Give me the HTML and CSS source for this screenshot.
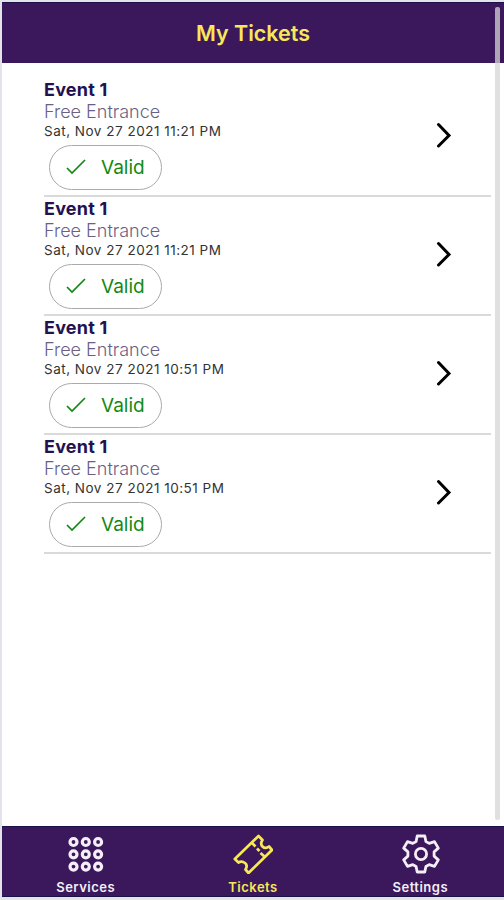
FILE: index.html
```html
<!DOCTYPE html>
<html lang="en">
<head>
    <meta charset="UTF-8">
    <meta name="viewport" content="width=device-width, initial-scale=1.0">
    <title>My Tickets</title>
    <link rel="stylesheet" href="styles.css">
</head>
<body>
    <div class="app">
        <header class="app-header">
            <h1>My Tickets</h1>
        </header>

        <!-- Ticket list -->
        <main class="ticket-list">
            <div class="ticket">
                <div class="ticket-info">
                    <h2>Event 1</h2>
                    <p class="ticket-type">Free Entrance</p>
                    <p class="ticket-date">Sat, Nov 27 2021 11:21 PM</p>
                    <div class="status">
                        <svg class="check" viewBox="0 0 22 18"><path d="M2 10l5 5L20 2"/></svg>
                        <span>Valid</span>
                    </div>
                </div>
                <svg class="chevron" viewBox="0 0 16 26"><path d="M2.5 2.500L13 13.500 2.500 24"/></svg>
            </div>
            <div class="ticket">
                <div class="ticket-info">
                    <h2>Event 1</h2>
                    <p class="ticket-type">Free Entrance</p>
                    <p class="ticket-date">Sat, Nov 27 2021 11:21 PM</p>
                    <div class="status">
                        <svg class="check" viewBox="0 0 22 18"><path d="M2 10l5 5L20 2"/></svg>
                        <span>Valid</span>
                    </div>
                </div>
                <svg class="chevron" viewBox="0 0 16 26"><path d="M2.5 2.500L13 13.500 2.500 24"/></svg>
            </div>
            <div class="ticket">
                <div class="ticket-info">
                    <h2>Event 1</h2>
                    <p class="ticket-type">Free Entrance</p>
                    <p class="ticket-date">Sat, Nov 27 2021 10:51 PM</p>
                    <div class="status">
                        <svg class="check" viewBox="0 0 22 18"><path d="M2 10l5 5L20 2"/></svg>
                        <span>Valid</span>
                    </div>
                </div>
                <svg class="chevron" viewBox="0 0 16 26"><path d="M2.5 2.500L13 13.500 2.500 24"/></svg>
            </div>
            <div class="ticket">
                <div class="ticket-info">
                    <h2>Event 1</h2>
                    <p class="ticket-type">Free Entrance</p>
                    <p class="ticket-date">Sat, Nov 27 2021 10:51 PM</p>
                    <div class="status">
                        <svg class="check" viewBox="0 0 22 18"><path d="M2 10l5 5L20 2"/></svg>
                        <span>Valid</span>
                    </div>
                </div>
                <svg class="chevron" viewBox="0 0 16 26"><path d="M2.5 2.500L13 13.500 2.500 24"/></svg>
            </div>
        </main>

        <!-- Bottom tabs -->
        <nav class="tab-bar">
            <a class="tab">
                <svg viewBox="0 0 40 40" stroke-width="3.2">
                    <circle cx="7.5" cy="8" r="3.5"/><circle cx="19.8" cy="8" r="3.5"/><circle cx="32.1" cy="8" r="3.5"/>
                    <circle cx="7.5" cy="20.3" r="3.5"/><circle cx="19.8" cy="20.3" r="3.5"/><circle cx="32.1" cy="20.3" r="3.5"/>
                    <circle cx="7.5" cy="32.6" r="3.5"/><circle cx="19.8" cy="32.6" r="3.5"/><circle cx="32.1" cy="32.6" r="3.5"/>
                </svg>
                <span>Services</span>
            </a>
            <a class="tab active">
                <svg viewBox="0 0 40 40" stroke-width="2.7">
                    <path d="M25.5 2l4 4c-2 3-1.500 5 0 6.500s4 2 6.500 0l3 3.500L15.500 39l-3-3.500c1.500-2.500 1.500-5-.5-6.500s-4-2-6.500-.5L1.800 25z"/>
                    <path d="M19 9l3.500 3.500m1.500 2l2.500 2.500m1 2l4.500 4"/>
                </svg>
                <span>Tickets</span>
            </a>
            <a class="tab">
                <svg viewBox="0 0 40 40" stroke-width="2.8">
                    <path d="M17.2 2h7.600l1.100 5.500 3.300 1.900 5.300-1.800 3.800 6.500-4.200 3.800v4.200l4.200 3.800-3.800 6.500-5.300-1.800-3.300 1.900-1.100 5.500h-7.600l-1.100-5.500-3.300-1.900-5.300 1.800-3.800-6.500 4.200-3.800v-4.200l-4.200-3.800 3.800-6.500 5.300 1.800 3.300-1.900z"/>
                    <circle cx="21" cy="20" r="5.6"/>
                </svg>
                <span>Settings</span>
            </a>
        </nav>
        <div class="scroll-thumb"></div>
    </div>
</body>
</html>
```
FILE: styles.css
```css
:root {
    --purple: #3b185b;
    --yellow: #f8e858;
    --navy: #241150;
    --frame: #e3e4ea;
}

* {
    box-sizing: border-box;
}

body {
    margin: 0;
    font-family: Inter, "Liberation Sans", sans-serif;
    background: #fff;
}

h1, h2, p {
    margin: 0;
}

.app {
    position: relative;
    display: flex;
    flex-direction: column;
    height: 900px;
    border: solid var(--frame);
    border-width: 2px 0 3px 2px;
}

/* Header */
.app-header {
    display: flex;
    align-items: center;
    justify-content: center;
    height: 61px;
    background: var(--purple);
    border-top: 1px solid #1c1049;
}

.app-header h1 {
    font-size: 21.5px;
    font-weight: 600;
    color: var(--yellow);
}

/* Ticket list */
.ticket-list {
    flex: 1;
    padding: 15px 13px 0 42px;
}

.ticket {
    display: flex;
    align-items: center;
    justify-content: space-between;
    height: 119px;
    padding: 0 39px 3px 0;
    border-bottom: 2px solid #dadada;
}

.ticket-info {
    margin-bottom: 2px;
}

.ticket h2 {
    font-size: 18px;
    line-height: 22px;
    font-weight: 700;
    letter-spacing: 0.2px;
    color: var(--navy);
}

.ticket-type {
    font-size: 18px;
    line-height: 22px;
    font-weight: 300;
    color: #6a5f84;
}

.ticket-date {
    font-size: 13.5px;
    line-height: 17px;
    letter-spacing: 0.5px;
    color: #333;
}

.status {
    display: flex;
    align-items: center;
    width: 113px;
    height: 45px;
    margin: 5px 0 0 5px;
    padding-left: 15px;
    gap: 14px;
    border: 1px solid #aaa;
    border-radius: 23px;
    font-size: 19px;
    color: #128a12;
}

.check {
    width: 22px;
    height: 18px;
    fill: none;
    stroke: currentColor;
    stroke-width: 1.7;
}

.chevron {
    width: 16px;
    height: 26px;
    fill: none;
    stroke: #000;
    stroke-width: 3;
    stroke-linecap: round;
}

/* Bottom tabs */
.tab-bar {
    display: flex;
    height: 71px;
    background: var(--purple);
    border-top: 1px solid #1c1049;
    border-bottom: 1px solid #1c1049;
}

.tab {
    flex: 1;
    display: flex;
    flex-direction: column;
    align-items: center;
    padding-top: 7px;
    font-size: 13px;
    font-weight: 600;
    line-height: 16px;
    letter-spacing: 0.5px;
    color: #f4eff7;
}

.tab.active {
    color: var(--yellow);
}

.tab svg {
    width: 40px;
    height: 40px;
    margin-bottom: 5px;
    fill: none;
    stroke: currentColor;
    stroke-linejoin: round;
}

/* Scroll indicator over the content */
.scroll-thumb {
    position: absolute;
    top: 5px;
    right: 4px;
    width: 5px;
    height: 813px;
    border-radius: 2px;
    background: rgba(214, 214, 214, 0.75);
}
```
